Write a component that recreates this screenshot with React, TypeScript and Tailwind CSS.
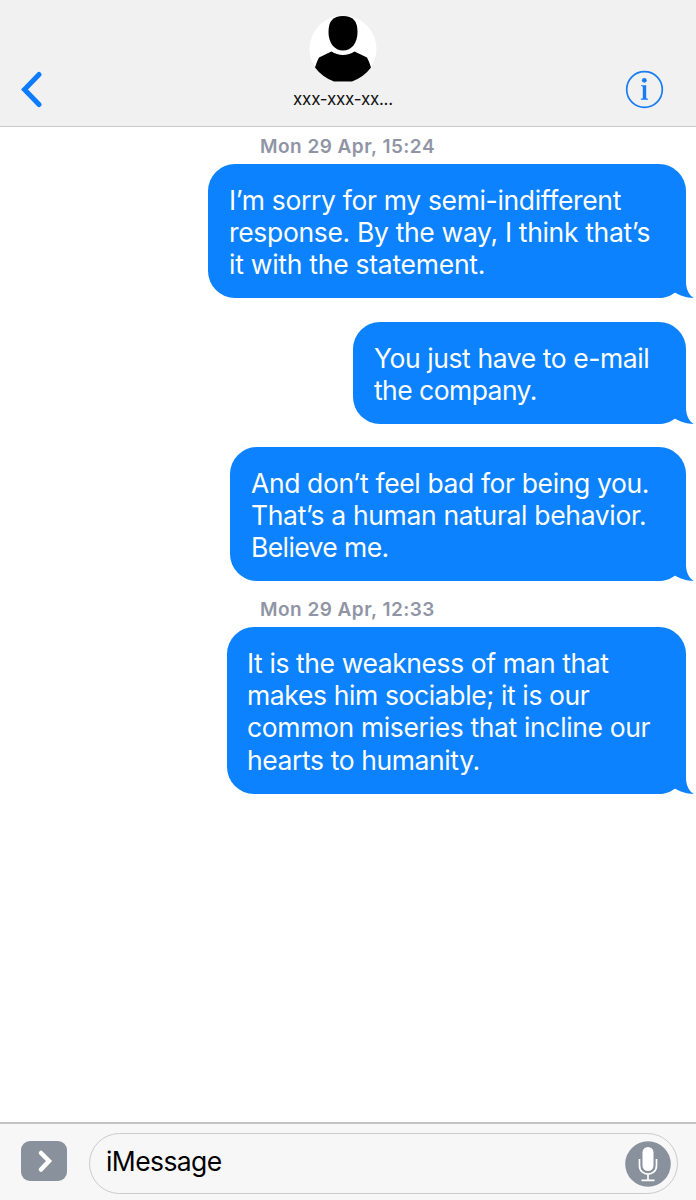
import React from "react";

type Line = { text: string; spacing: string };

function Stamp({ children, className }: { children: React.ReactNode; className: string }) {
  return (
    <div className={`h-[37px] pl-[260px] pt-[10px] text-[19px] leading-[20px] font-semibold tracking-[0.47px] text-[#9095a5] whitespace-nowrap ${className}`}>
      {children}
    </div>
  );
}

function Bubble({ lines, className }: { lines: Line[]; className: string }) {
  return (
    <div className={`relative ml-auto mr-[10px] rounded-[27px] bg-[#0c82ff] pl-[21px] pt-5 text-[26.5px] leading-[32.2px] text-white ${className}`}>
      {lines.map((l) => (
        <div key={l.text} className={`relative z-10 whitespace-nowrap ${l.spacing}`}>
          {l.text}
        </div>
      ))}
      <svg className="absolute -right-2 bottom-0" width="38" height="28" viewBox="0 0 38 28" fill="#0c82ff">
        <path d="M2 0H30V13C30.500 20 33 25 37.800 28C30 28 24 25.500 18.500 22.300C13 26 8 28 2 28Z" />
      </svg>
    </div>
  );
}

export default function App() {
  return (
    <div className="flex h-[1200px] w-[696px] flex-col overflow-hidden bg-white font-[Inter,sans-serif]">
      <header className="flex h-[127px] shrink-0 justify-between border-b border-[#c9c9cb] bg-[#f1f1f1]">
        <div className="w-[210px] pl-5 pt-[71px]">
          <svg width="24" height="37" viewBox="0 0 24 37" fill="none" stroke="#0b7cff" strokeWidth="5" strokeLinecap="round" strokeLinejoin="miter">
            <path d="M19 3.500L4.500 18.500L19 33.500" />
          </svg>
        </div>
        <div className="-ml-[10px] flex w-[140px] flex-col items-center pt-[15px]">
          <svg width="68" height="68" viewBox="0 0 68 68">
            <circle cx="34" cy="34" r="33.500" fill="#fff" />
            <path fill="#000" d="M34 1C44 1 48.500 6 48.500 17C48.500 28 42.500 35.500 34 35.500C25.500 35.500 19.500 28 19.500 17C19.500 6 24 1 34 1Z" />
            <path fill="#000" d="M22.500 36.500C29 41 39 41 45.500 36.500L58 42.500Q60 46 62 52.500Q55 62 43 66.500H25Q13 62 6 52.500Q8 46 10 42.500Z" />
          </svg>
          <div className="mt-[6px] text-[17px] leading-[20px] tracking-[-0.25px] text-[#111] whitespace-nowrap">xxx-xxx-xx...</div>
        </div>
        <div className="flex w-[210px] justify-end pr-8 pt-[70px]">
          <svg width="39" height="39" viewBox="0 0 39 39">
            <circle cx="19.500" cy="19.500" r="17.800" fill="none" stroke="#187cf2" strokeWidth="1.700" />
            <circle cx="19.300" cy="10.300" r="2.400" fill="#187cf2" />
            <path fill="#187cf2" d="M16 15.200H21.200V28Q21.300 28.700 23 28.800V29.700H15.800V28.800Q17.700 28.700 17.800 28V17Q17.700 16.200 16 16.100Z" />
          </svg>
        </div>
      </header>

      <main className="flex flex-1 flex-col">
        <Stamp className="">Mon 29 Apr, 15:24</Stamp>
        <Bubble
          className="h-[134px] w-[478px]"
          lines={[
            { text: "I’m sorry for my semi-indifferent", spacing: "tracking-[-0.34px]" },
            { text: "response. By the way, I think that’s", spacing: "tracking-[-0.33px]" },
            { text: "it with the statement.", spacing: "tracking-[-0.26px]" },
          ]}
        />
        <Bubble
          className="mt-6 h-[102px] w-[333px]"
          lines={[
            { text: "You just have to e-mail", spacing: "tracking-[-0.42px]" },
            { text: "the company.", spacing: "tracking-[-0.55px]" },
          ]}
        />
        <Bubble
          className="mt-[23px] h-[134px] w-[456px]"
          lines={[
            { text: "And don’t feel bad for being you.", spacing: "tracking-[-0.38px]" },
            { text: "That’s a human natural behavior.", spacing: "tracking-[-0.34px]" },
            { text: "Believe me.", spacing: "tracking-[-0.6px]" },
          ]}
        />
        <Stamp className="mt-[9px]">Mon 29 Apr, 12:33</Stamp>
        <Bubble
          className="h-[167px] w-[459px] pl-[20px]!"
          lines={[
            { text: "It is the weakness of man that", spacing: "tracking-[-0.41px]" },
            { text: "makes him sociable; it is our", spacing: "tracking-[-0.38px]" },
            { text: "common miseries that incline our", spacing: "tracking-[-0.36px]" },
            { text: "hearts to humanity.", spacing: "tracking-[-0.4px]" },
          ]}
        />
      </main>

      <footer className="flex h-[78px] shrink-0 items-start border-t-2 border-[#c3c3c5] bg-[#f7f7f7] pl-[21px]">
        <div className="mt-[17px] flex h-[40px] w-[46px] items-center justify-center rounded-[9px] bg-[#89919c]">
          <svg width="46" height="40" viewBox="0 0 46 40" fill="none" stroke="#fff" strokeWidth="4.500" strokeLinecap="round">
            <path d="M20 12L28 20L20 28.500" />
          </svg>
        </div>
        <div className="ml-[22px] mt-[9px] flex h-[61px] w-[589px] items-center justify-between rounded-full border border-[#cbcbcd] pl-4 pr-[6px]">
          <span className="pb-[5px] text-[26.5px] leading-[32px] tracking-[-0.6px] text-black">iMessage</span>
          <svg width="46" height="46" viewBox="0 0 46 46">
            <circle cx="23" cy="23" r="22.800" fill="#89919c" />
            <rect x="17.500" y="6" width="11" height="24" rx="5.500" fill="#fff" />
            <path d="M14.500 18V24.500C14.500 36 31.500 36 31.500 24.500V18M23 33V38.800M16.500 39.300H29.500" fill="none" stroke="#fff" strokeWidth="1.700" />
          </svg>
        </div>
      </footer>
    </div>
  );
}
